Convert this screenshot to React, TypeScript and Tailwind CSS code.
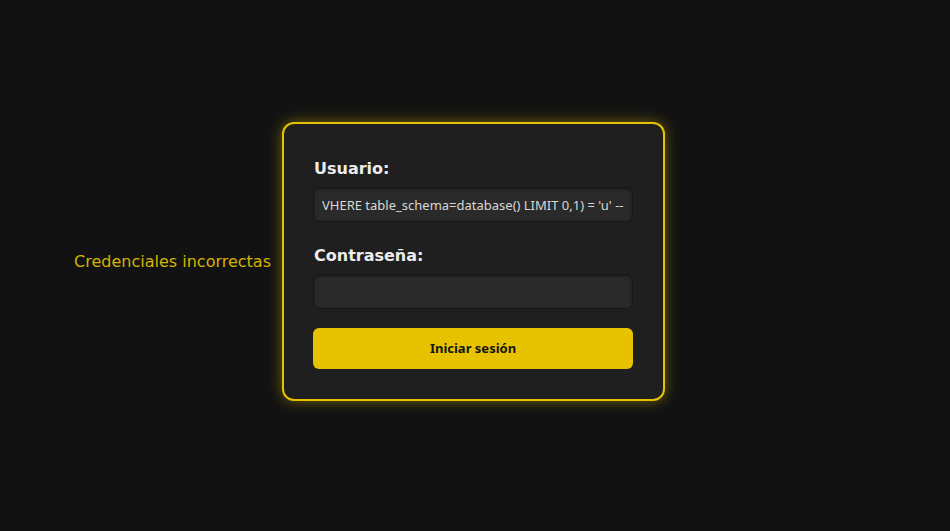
import React from "react";

export default function App() {
  return (
    <div className="min-h-screen bg-[#121212] grid grid-cols-[1fr_auto_1fr] items-center pb-2 font-['DejaVu_Sans',sans-serif]">
      {/* error message */}
      <div className="flex justify-end pr-[11px]">
        <p className="text-[#d4b400] text-base">Credenciales incorrectas</p>
      </div>

      {/* login card */}
      <form
        className="w-[383px] mr-[3px] bg-[#1f1f1f] border-2 border-[#e6c200] rounded-xl pl-[30px] pr-[29px] pt-[31px] pb-[30px] shadow-[0_0_14px_rgba(230,194,0,0.45)] flex flex-col"
        onSubmit={(e) => e.preventDefault()}>
        <label className="text-[#ececec] font-bold text-base leading-7">Usuario:</label>
        <input
          readOnly
          value="VHERE table_schema=database() LIMIT 0,1) = 'u' --"
          className="mt-1 -ml-px h-[35px] w-[320px] rounded-md bg-[#2a2a2a] border border-[#171717] px-[8px] text-[13px] text-[#d8d8d8] font-['Noto_Sans',sans-serif] outline-none shadow-[inset_0_1px_3px_rgba(0,0,0,0.5)]"
        />

        <label className="mt-5 text-[#ececec] font-bold text-base leading-7">Contraseña:</label>
        <input
          type="password"
          readOnly
          className="mt-1 -ml-px h-[35px] w-[320px] rounded-md bg-[#2a2a2a] border border-[#171717] px-[8px] text-[13px] text-[#d8d8d8] outline-none shadow-[inset_0_1px_3px_rgba(0,0,0,0.5)]"
        />

        <button
          type="submit"
          className="mt-[19px] -ml-px h-[41px] w-[320px] rounded-md bg-[#e6c200] text-[#141414] text-[13px] font-bold font-['Noto_Sans',sans-serif]">
          Iniciar sesión
        </button>
      </form>

      <div />
    </div>
  );
}
